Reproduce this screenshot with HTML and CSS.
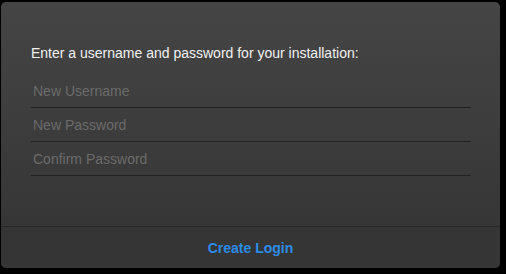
FILE: index.html
```html
<!DOCTYPE html>
<html lang="en">
<head>
    <meta charset="UTF-8">
    <title>Create Login</title>
    <link rel="stylesheet" href="styles.css">
</head>
<body>
    <div class="dialog">
        <form class="dialog-body" id="loginForm" autocomplete="off">
            <p class="intro">Enter a username and password for your installation:</p>
            <input type="text" class="field" id="username" placeholder="New Username">
            <input type="password" class="field" id="password" placeholder="New Password">
            <input type="password" class="field" id="confirm" placeholder="Confirm Password">
        </form>
        <div class="dialog-footer">
            <button type="submit" form="loginForm" class="create">Create Login</button>
        </div>
    </div>
</body>
</html>
```

FILE: styles.css
```css
body {
    font-family: "Liberation Sans", Arial, sans-serif;
    font-size: 14px;
    background: #000;
    margin: 0;
    padding: 2px 0 0 1px;
}

.dialog {
    width: 499px;
    height: 266px;
    border-radius: 5px;
    background: linear-gradient(#454545, #333333);
    display: flex;
    flex-direction: column;
    overflow: hidden;
}

.dialog-body {
    flex: 1;
    padding: 43px 29px 0 30px;
    display: flex;
    flex-direction: column;
}

.intro {
    margin: 0 0 13px;
    color: #f2f2f2;
    line-height: 16px;
}

.field {
    height: 34px;
    box-sizing: border-box;
    padding: 0 2px;
    border: none;
    border-bottom: 1px solid #222;
    background: transparent;
    color: #ddd;
    font: inherit;
    outline: none;
}

    .field::placeholder {
        color: #6b6b6b;
    }

.dialog-footer {
    height: 41px;
    border-top: 1px solid #262626;
    background: #353535;
    display: flex;
    align-items: center;
    justify-content: center;
}

.create {
    border: none;
    background: none;
    padding: 0;
    font: inherit;
    font-weight: bold;
    color: #2c8ce8;
    cursor: pointer;
}
```
